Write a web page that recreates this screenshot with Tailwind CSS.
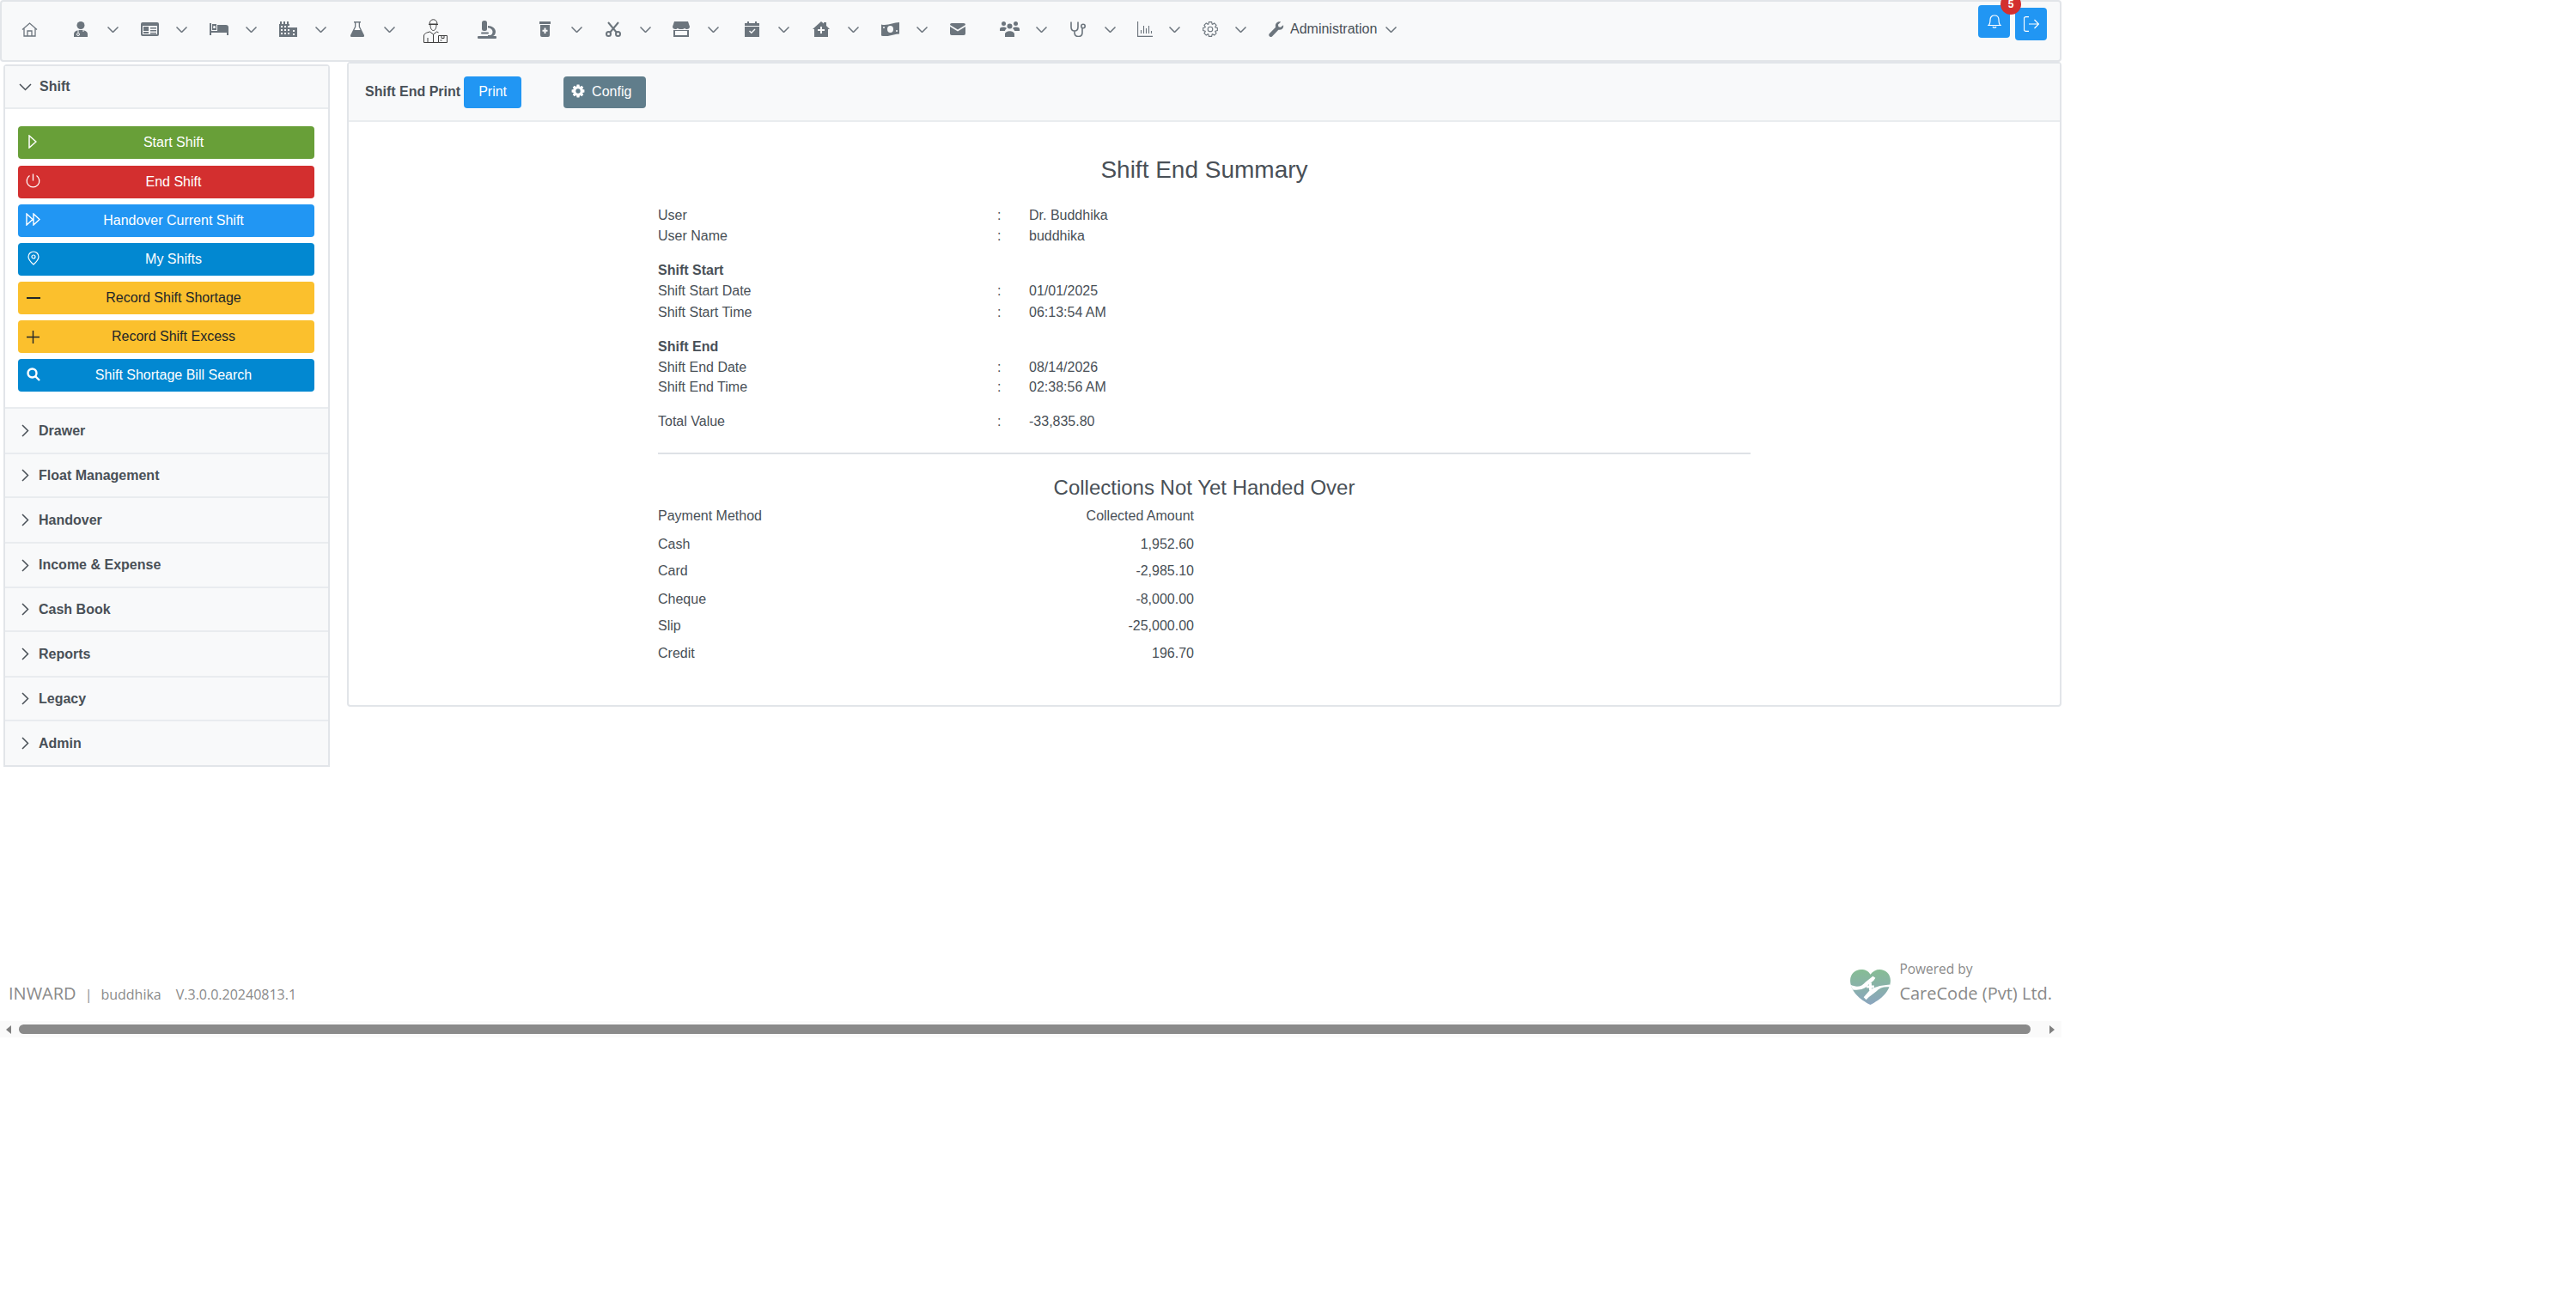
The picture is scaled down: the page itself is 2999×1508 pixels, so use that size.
<!DOCTYPE html>
<html lang="en">
<head>
  <meta charset="UTF-8" />
  <title>Shift End Summary</title>
  <script src="https://cdn.jsdelivr.net/npm/@tailwindcss/browser@4"></script>
</head>
<body class="bg-white font-['Liberation_Sans',sans-serif] text-[16px] text-[#495057]">
<div class="w-[2400px]">

  <!-- Top nav -->
  <nav class="relative h-[72px] bg-[#f8f9fa] border-2 border-[#e2e5e9] rounded-[4px] flex items-center text-[#6c757d]">
    <div class="flex items-center h-full pb-[4px] pl-[10px]">
      <!-- home -->
      <span class="w-[44px] mr-[16px] flex justify-center">
        <svg class="w-[19px] h-[17px]" viewBox="0 0 19 17" fill="none" stroke="currentColor" stroke-width="1.300"><path d="M1 8.500L9.500 1 18 8.500M3 7v9h13V7M7 16v-6h5v6"/></svg>
      </span>
      <!-- doctor -->
      <span class="w-[44px] flex justify-center">
        <svg class="w-[16px] h-[18px]" viewBox="0 0 16 18" fill="currentColor"><circle cx="8" cy="4.500" r="4.500"/><path d="M0 18v-3c0-3.500 3-5 8-5s8 1.500 8 5v3z"/><path fill="none" stroke="#f8f9fa" stroke-width="1" d="M5 10v3M11 10v2"/><circle cx="5" cy="15" r="1.500" fill="none" stroke="#f8f9fa"/></svg>
      </span>
      <span class="w-[30px] mr-[6px] flex justify-center">
        <svg class="w-[13px] h-[7px]" viewBox="0 0 13 7" fill="none" stroke="currentColor" stroke-width="1.500"><path d="M.5.500l6 6 6-6"/></svg>
      </span>
      <!-- id card -->
      <span class="w-[44px] flex justify-center">
        <svg class="w-[21px] h-[16px]" viewBox="0 0 21 16" fill="currentColor"><path fill-rule="evenodd" d="M2 0h17a2 2 0 012 2v12a2 2 0 01-2 2H2a2 2 0 01-2-2V2a2 2 0 012-2zM2 4v10h17V4z"/><path d="M3 5h6v5H3zM3 11h6v2H3zM11 6h7v1.500h-7zM11 9h7v1.500h-7zM11 12h7v1.500h-7z"/></svg>
      </span>
      <span class="w-[30px] mr-[7px] flex justify-center">
        <svg class="w-[13px] h-[7px]" viewBox="0 0 13 7" fill="none" stroke="currentColor" stroke-width="1.500"><path d="M.5.500l6 6 6-6"/></svg>
      </span>
      <!-- bed -->
      <span class="w-[44px] flex justify-center">
        <svg class="w-[22px] h-[14px]" viewBox="0 0 22 14" fill="currentColor"><path fill-rule="evenodd" d="M0 0h2v9h7V2h10a3 3 0 013 3v9h-2v-3H2v3H0z"/><path fill-rule="evenodd" d="M3 1h5v7H3zM5.500 3a1.500 1.500 0 100 3 1.500 1.500 0 000-3z"/></svg>
      </span>
      <span class="w-[30px] mr-[7px] flex justify-center">
        <svg class="w-[13px] h-[7px]" viewBox="0 0 13 7" fill="none" stroke="currentColor" stroke-width="1.500"><path d="M.5.500l6 6 6-6"/></svg>
      </span>
      <!-- hospital blocks -->
      <span class="w-[44px] flex justify-center">
        <svg class="w-[22px] h-[18px]" viewBox="0 0 22 18" fill="currentColor"><path d="M0 3h1V0h2v3h2V0h2v3h2V0h2v3h1v4h9v11H0z"/><path fill="#f8f9fa" d="M2 5h2v2H2zM6 5h2v2H6zM10 5h2v2h-2zM2 9h2v2H2zM6 9h2v2H6zM10 9h2v2h-2zM2 13h2v2H2zM6 13h2v2H6zM10 13h2v2h-2zM16 10h2v2h-2zM16 14h2v2h-2z"/></svg>
      </span>
      <span class="w-[30px] mr-[6px] flex justify-center">
        <svg class="w-[13px] h-[7px]" viewBox="0 0 13 7" fill="none" stroke="currentColor" stroke-width="1.500"><path d="M.5.500l6 6 6-6"/></svg>
      </span>
      <!-- flask -->
      <span class="w-[44px] flex justify-center">
        <svg class="w-[16px] h-[18px]" viewBox="0 0 16 18" fill="currentColor"><path d="M4 0h8v1.500h-1V6l5 10a1.500 1.500 0 01-1.500 2h-13A1.500 1.500 0 010 16L5 6V1.500H4z"/><path fill="#f8f9fa" d="M6.300 1.500h3.400v4.800L11.500 10h-7l1.800-3.700z"/></svg>
      </span>
      <span class="w-[30px] mr-[17px] flex justify-center">
        <svg class="w-[13px] h-[7px]" viewBox="0 0 13 7" fill="none" stroke="currentColor" stroke-width="1.500"><path d="M.5.500l6 6 6-6"/></svg>
      </span>
      <!-- delivery man -->
      <span class="w-[44px] mt-[4px] mr-[16px] flex justify-center">
        <svg class="w-[28px] h-[28px]" viewBox="0 0 28 28" fill="none" stroke="#3f3f3f" stroke-width="1"><path d="M7 6c0-7 9-7 9 0zM6 6.500h11M8 7c0 4 1.500 6.500 3.500 6.500S15 11 15 7M.5 27.500V20c0-3 3-4 7-5l4 3 4-3 2 .8M5 27.500V22M11.500 18v9.500M.5 27.500h17M17.500 19.500h10v8h-10zM21 19.500v3h3v-3M19.500 25h2"/></svg>
      </span>
      <!-- microscope -->
      <span class="w-[44px] mr-[23px] flex justify-center">
        <svg class="w-[22px] h-[21px]" viewBox="0 0 22 21" fill="currentColor"><rect x="5" y="0" width="6" height="12" rx="2.500"/><rect x="0" y="18" width="22" height="3" rx="1"/><path d="M12 6c5 0 9 3 9 7 0 3-2 5-4 5h-5v-1h3c2-1 2.500-2.500 2.500-4 0-2.500-2.500-4.500-5.500-4.500z"/><rect x="4" y="13.500" width="9" height="2" rx="1"/></svg>
      </span>
      <!-- medicine -->
      <span class="w-[44px] flex justify-center">
        <svg class="w-[13px] h-[18px]" viewBox="0 0 13 18" fill="currentColor"><path d="M0 0h13v3H0z"/><path fill-rule="evenodd" d="M1 4h11v12a2 2 0 01-2 2H3a2 2 0 01-2-2zM5.500 7.500v2.300H3.500v2h2V14h2v-2.200h2v-2h-2V7.500z"/></svg>
      </span>
      <span class="w-[30px] mr-[6px] flex justify-center">
        <svg class="w-[13px] h-[7px]" viewBox="0 0 13 7" fill="none" stroke="currentColor" stroke-width="1.500"><path d="M.5.500l6 6 6-6"/></svg>
      </span>
      <!-- scissors -->
      <span class="w-[44px] flex justify-center">
        <svg class="w-[18px] h-[18px]" viewBox="0 0 18 18" fill="none" stroke="currentColor" stroke-width="2"><circle cx="3.500" cy="14.500" r="2.500"/><circle cx="14.500" cy="14.500" r="2.500"/><path d="M3 1l10 12M15 1L5 13"/></svg>
      </span>
      <span class="w-[30px] mr-[5px] flex justify-center">
        <svg class="w-[13px] h-[7px]" viewBox="0 0 13 7" fill="none" stroke="currentColor" stroke-width="1.500"><path d="M.5.500l6 6 6-6"/></svg>
      </span>
      <!-- store -->
      <span class="w-[44px] flex justify-center">
        <svg class="w-[20px] h-[18px]" viewBox="0 0 20 18" fill="currentColor"><path d="M2 0h16l2 6c0 2-1.500 3-3.300 3-1.200 0-2-.5-2.500-1.300C13.700 8.500 12 9 10 9s-3.700-.5-4.200-1.300C5.300 8.500 4.500 9 3.300 9 1.500 9 0 8 0 6z"/><path fill-rule="evenodd" d="M1 10h18v8H1zM3 11v5h14v-5z"/></svg>
      </span>
      <span class="w-[30px] mr-[8px] flex justify-center">
        <svg class="w-[13px] h-[7px]" viewBox="0 0 13 7" fill="none" stroke="currentColor" stroke-width="1.500"><path d="M.5.500l6 6 6-6"/></svg>
      </span>
      <!-- calendar -->
      <span class="w-[44px] flex justify-center">
        <svg class="w-[17px] h-[18px]" viewBox="0 0 17 18" fill="currentColor"><path d="M3 0h2v2h7V0h2v2h3v3H0V2h3z"/><path fill-rule="evenodd" d="M0 6h17v12H0zM5 11.500l1-1 1.800 1.800 3.700-3.700 1 1-4.700 4.700z"/></svg>
      </span>
      <span class="w-[30px] mr-[7px] flex justify-center">
        <svg class="w-[13px] h-[7px]" viewBox="0 0 13 7" fill="none" stroke="currentColor" stroke-width="1.500"><path d="M.5.500l6 6 6-6"/></svg>
      </span>
      <!-- home medical -->
      <span class="w-[44px] flex justify-center">
        <svg class="w-[20px] h-[18px]" viewBox="0 0 20 18" fill="currentColor"><path fill-rule="evenodd" d="M10 0l3 2.500V1h3v4l4 4h-2v9H2V9H0zM9 6v3H6v2h3v3h2v-3h3V9h-3V6z"/></svg>
      </span>
      <span class="w-[30px] mr-[6px] flex justify-center">
        <svg class="w-[13px] h-[7px]" viewBox="0 0 13 7" fill="none" stroke="currentColor" stroke-width="1.500"><path d="M.5.500l6 6 6-6"/></svg>
      </span>
      <!-- money -->
      <span class="w-[44px] flex justify-center">
        <svg class="w-[21px] h-[16px]" viewBox="0 0 21 16" fill="currentColor"><path fill-rule="evenodd" d="M0 2.500C7 4.500 14 0 21 0v13.500C14 13.500 7 18 0 15.500zM10.500 4a3.500 4 0 100 8 3.500 4 0 000-8zM3 5a1 1 0 100 2 1 1 0 000-2zM18 9a1 1 0 100 2 1 1 0 000-2z"/></svg>
      </span>
      <span class="w-[30px] mr-[5px] flex justify-center">
        <svg class="w-[13px] h-[7px]" viewBox="0 0 13 7" fill="none" stroke="currentColor" stroke-width="1.500"><path d="M.5.500l6 6 6-6"/></svg>
      </span>
      <!-- mail -->
      <span class="w-[44px] mr-[16px] flex justify-center">
        <svg class="w-[18px] h-[14px]" viewBox="0 0 18 14" fill="currentColor"><path d="M2 0h14a2 2 0 012 2L9 7.500 0 2a2 2 0 012-2zM0 4l9 5.500L18 4v8a2 2 0 01-2 2H2a2 2 0 01-2-2z"/></svg>
      </span>
      <!-- users -->
      <span class="w-[44px] flex justify-center">
        <svg class="w-[23px] h-[18px]" viewBox="0 0 23 18" fill="currentColor"><circle cx="4.500" cy="2.500" r="2.500"/><circle cx="18.500" cy="2.500" r="2.500"/><circle cx="11.500" cy="5.500" r="3"/><path d="M0 9c0-3 6-3 8-1-1 1-2 2-2 3H0zM23 9c0-3-6-3-8-1 1 1 2 2 2 3h6zM6 18v-3c0-5 11-5 11 0v3z"/></svg>
      </span>
      <span class="w-[30px] mr-[6px] flex justify-center">
        <svg class="w-[13px] h-[7px]" viewBox="0 0 13 7" fill="none" stroke="currentColor" stroke-width="1.500"><path d="M.5.500l6 6 6-6"/></svg>
      </span>
      <!-- stethoscope -->
      <span class="w-[44px] flex justify-center">
        <svg class="w-[19px] h-[18px]" viewBox="0 0 19 18" fill="none" stroke="currentColor" stroke-width="1.600"><path d="M1 .5v6c0 3 2 4.500 4 4.500s4-1.500 4-4.500v-6M5 11v2c0 3 2 4.500 4.500 4.500S14 16 14 13V8"/><circle cx="15" cy="5.500" r="2.200"/></svg>
      </span>
      <span class="w-[30px] mr-[4px] flex justify-center">
        <svg class="w-[13px] h-[7px]" viewBox="0 0 13 7" fill="none" stroke="currentColor" stroke-width="1.500"><path d="M.5.500l6 6 6-6"/></svg>
      </span>
      <!-- chart -->
      <span class="w-[44px] -mr-[3px] flex justify-center">
        <svg class="w-[18px] h-[18px]" viewBox="0 0 18 18" fill="none" stroke="currentColor" stroke-width="1.100"><path d="M.6 0v17.400H18M4.500 14v-4M7.500 14V5M10.500 14V8M13.500 14V5M16.500 14v-3"/></svg>
      </span>
      <span class="w-[30px] mr-[5px] flex justify-center">
        <svg class="w-[13px] h-[7px]" viewBox="0 0 13 7" fill="none" stroke="currentColor" stroke-width="1.500"><path d="M.5.500l6 6 6-6"/></svg>
      </span>
      <!-- cog -->
      <span class="w-[44px] -mr-[2px] flex justify-center">
        <svg class="w-[18px] h-[18px]" viewBox="0 0 18 18" fill="none" stroke="currentColor" stroke-width="1.100"><polygon points="14.92,6.85 17.34,7.38 17.34,10.62 14.92,11.15 14.71,11.67 16.04,13.75 13.75,16.04 11.67,14.71 11.15,14.92 10.62,17.34 7.38,17.34 6.85,14.92 6.33,14.71 4.25,16.04 1.96,13.75 3.29,11.67 3.08,11.15 0.66,10.62 0.66,7.38 3.08,6.85 3.29,6.33 1.96,4.25 4.25,1.96 6.33,3.29 6.85,3.08 7.38,0.66 10.62,0.66 11.15,3.08 11.67,3.29 13.75,1.96 16.04,4.25 14.71,6.33"/><circle cx="9" cy="9" r="2.800"/></svg>
      </span>
      <span class="w-[30px] mr-[17px] flex justify-center">
        <svg class="w-[13px] h-[7px]" viewBox="0 0 13 7" fill="none" stroke="currentColor" stroke-width="1.500"><path d="M.5.500l6 6 6-6"/></svg>
      </span>
      <!-- wrench -->
      <svg class="w-[19px] h-[18px] mr-[7px]" viewBox="0 0 19 19" fill="currentColor"><path d="M18.500 4.500c.8 3-1.500 6.500-6 5.800L5 18.300c-1 1-2.500 1-3.500 0s-1-2.500-.2-3.300L9 7c-1-5 3-7.500 6.500-6.500L12 4l.7 2.500 2.500.7z"/></svg>
      <span class="text-[16px] text-[#495057] mr-[10px]">Administration</span>
      <svg class="w-[13px] h-[7px]" viewBox="0 0 13 7" fill="none" stroke="currentColor" stroke-width="1.500"><path d="M.5.500l6 6 6-6"/></svg>
    </div>

    <!-- Right buttons -->
    <div class="absolute right-[15px] top-[4px] flex items-start gap-[6px]">
      <div class="relative w-[37px] h-[38px] bg-[#2196f3] rounded-[4px] flex items-center justify-center">
        <svg class="w-[16px] h-[16px] -mt-[1px]" viewBox="0 0 16 16" fill="none" stroke="white" stroke-width="1.200"><path d="M1 12.500c2-1.500 2-4 2-6.500 0-3 2-5 5-5s5 2 5 5c0 2.500 0 5 2 6.500zM6 14c.5 1.600 3.500 1.600 4 0"/></svg>
        <span class="absolute -top-[13px] -right-[13px] w-[24px] h-[24px] rounded-full bg-[#d32f2f] text-white text-[12px] font-bold flex items-center justify-center">5</span>
      </div>
      <div class="w-[37px] h-[38px] mt-[3px] bg-[#2196f3] rounded-[4px] flex items-center justify-center">
        <svg class="w-[18px] h-[18px]" viewBox="0 0 18 18" fill="none" stroke="white" stroke-width="1.200"><path d="M6 .6H2.500a2 2 0 00-2 2v12.800a2 2 0 002 2H6M6 9h11.500M12.500 4l5 5-5 5"/></svg>
      </div>
    </div>
  </nav>

  <div class="flex items-start">
    <!-- Left accordion -->
    <aside class="w-[380px] ml-[4px] mt-[3px] border-2 border-[#e2e5e9] rounded-t-[4px] font-bold">
      <div class="h-[50px] bg-[#f8f9fa] flex items-center pl-[16px] border-b-2 border-[#e9ecef]">
        <svg class="w-[15px] h-[9px] mr-[9px]" viewBox="0 0 15 9" fill="none" stroke="#495057" stroke-width="1.500"><path d="M1 1l6.500 6.500L14 1"/></svg>
        <span>Shift</span>
      </div>
      <div class="h-[349px] pt-[20px] pl-[15px] pr-[16px] border-b-2 border-[#e9ecef] flex flex-col gap-[7px] font-normal">
        <div class="relative h-[38px] mb-[1px] pl-[17px] bg-[#689f38] rounded-[4px] text-white flex items-center justify-center">
          <svg class="absolute left-[12px] top-[10px] w-[10px] h-[16px]" viewBox="0 0 10 16" fill="none" stroke="white" stroke-width="1.500"><path d="M1 1v14l8-7z"/></svg>
          Start Shift
        </div>
        <div class="relative h-[38px] pl-[17px] bg-[#d32f2f] rounded-[4px] text-white flex items-center justify-center">
          <svg class="absolute left-[9px] top-[9px] w-[17px] h-[17px]" viewBox="0 0 17 17" fill="none" stroke="white" stroke-width="1.300"><path d="M8.500 .5v8M4.500 2.500a7.300 7.300 0 108 0"/></svg>
          End Shift
        </div>
        <div class="relative h-[38px] pl-[17px] bg-[#2196f3] rounded-[4px] text-white flex items-center justify-center">
          <svg class="absolute left-[9px] top-[10px] w-[17px] h-[15px]" viewBox="0 0 17 15" fill="none" stroke="white" stroke-width="1.400"><path d="M1 1v13l7-6.500zM9 1v13l7-6.500z"/></svg>
          Handover Current Shift
        </div>
        <div class="relative h-[38px] pl-[17px] bg-[#0288d1] rounded-[4px] text-white flex items-center justify-center">
          <svg class="absolute left-[11px] top-[9px] w-[14px] h-[17px]" viewBox="0 0 14 17" fill="none" stroke="white" stroke-width="1.200"><path d="M7 16C3 12.500 1 10 1 7a6 6 0 0112 0c0 3-2 5.500-6 9z"/><circle cx="7" cy="7" r="2"/></svg>
          My Shifts
        </div>
        <div class="relative h-[38px] pl-[17px] bg-[#fbc02d] rounded-[4px] text-[#212529] flex items-center justify-center">
          <svg class="absolute left-[10px] top-[18px] w-[16px] h-[2px]" viewBox="0 0 16 2" fill="#212529"><rect width="16" height="2"/></svg>
          Record Shift Shortage
        </div>
        <div class="relative h-[38px] pl-[17px] bg-[#fbc02d] rounded-[4px] text-[#212529] flex items-center justify-center">
          <svg class="absolute left-[10px] top-[12px] w-[15px] h-[15px]" viewBox="0 0 15 15" fill="none" stroke="#212529" stroke-width="1.400"><path d="M7.500 0v15M0 7.500h15"/></svg>
          Record Shift Excess
        </div>
        <div class="relative h-[38px] pl-[17px] bg-[#0288d1] rounded-[4px] text-white flex items-center justify-center">
          <svg class="absolute left-[10px] top-[10px] w-[16px] h-[16px]" viewBox="0 0 16 16" fill="none" stroke="white" stroke-width="2.400"><circle cx="6.500" cy="6.500" r="5"/><path d="M10 10l5 5"/></svg>
          Shift Shortage Bill Search
        </div>
      </div>
      <div class="h-[53px] bg-[#f8f9fa] flex items-center pl-[19px] border-b-2 border-[#e9ecef]">
        <svg class="w-[9px] h-[15px] mr-[11px]" viewBox="0 0 9 15" fill="none" stroke="#495057" stroke-width="1.500"><path d="M1 1l6.500 6.500L1 14"/></svg>
        <span>Drawer</span>
      </div>
      <div class="h-[51px] bg-[#f8f9fa] flex items-center pl-[19px] border-b-2 border-[#e9ecef]">
        <svg class="w-[9px] h-[15px] mr-[11px]" viewBox="0 0 9 15" fill="none" stroke="#495057" stroke-width="1.500"><path d="M1 1l6.500 6.500L1 14"/></svg>
        <span>Float Management</span>
      </div>
      <div class="h-[53px] bg-[#f8f9fa] flex items-center pl-[19px] border-b-2 border-[#e9ecef]">
        <svg class="w-[9px] h-[15px] mr-[11px]" viewBox="0 0 9 15" fill="none" stroke="#495057" stroke-width="1.500"><path d="M1 1l6.500 6.500L1 14"/></svg>
        <span>Handover</span>
      </div>
      <div class="h-[52px] bg-[#f8f9fa] flex items-center pl-[19px] border-b-2 border-[#e9ecef]">
        <svg class="w-[9px] h-[15px] mr-[11px]" viewBox="0 0 9 15" fill="none" stroke="#495057" stroke-width="1.500"><path d="M1 1l6.500 6.500L1 14"/></svg>
        <span>Income &amp; Expense</span>
      </div>
      <div class="h-[51px] bg-[#f8f9fa] flex items-center pl-[19px] border-b-2 border-[#e9ecef]">
        <svg class="w-[9px] h-[15px] mr-[11px]" viewBox="0 0 9 15" fill="none" stroke="#495057" stroke-width="1.500"><path d="M1 1l6.500 6.500L1 14"/></svg>
        <span>Cash Book</span>
      </div>
      <div class="h-[53px] bg-[#f8f9fa] flex items-center pl-[19px] border-b-2 border-[#e9ecef]">
        <svg class="w-[9px] h-[15px] mr-[11px]" viewBox="0 0 9 15" fill="none" stroke="#495057" stroke-width="1.500"><path d="M1 1l6.500 6.500L1 14"/></svg>
        <span>Reports</span>
      </div>
      <div class="h-[51px] bg-[#f8f9fa] flex items-center pl-[19px] border-b-2 border-[#e9ecef]">
        <svg class="w-[9px] h-[15px] mr-[11px]" viewBox="0 0 9 15" fill="none" stroke="#495057" stroke-width="1.500"><path d="M1 1l6.500 6.500L1 14"/></svg>
        <span>Legacy</span>
      </div>
      <div class="h-[51px] bg-[#f8f9fa] flex items-center pl-[19px]">
        <svg class="w-[9px] h-[15px] mr-[11px]" viewBox="0 0 9 15" fill="none" stroke="#495057" stroke-width="1.500"><path d="M1 1l6.500 6.500L1 14"/></svg>
        <span>Admin</span>
      </div>
    </aside>

    <!-- Main panel -->
    <main class="w-[1996px] ml-[20px] border-2 border-[#e2e5e9] rounded-[4px]">
      <div class="h-[68px] bg-[#f8f9fa] border-b-2 border-[#e9ecef] flex items-center pl-[19px]">
        <span class="font-bold">Shift End Print</span>
        <span class="ml-[4px] w-[67px] h-[37px] bg-[#2196f3] rounded-[4px] text-white flex items-center justify-center">Print</span>
        <span class="ml-[49px] w-[96px] h-[37px] pl-[9px] bg-[#607d8b] rounded-[4px] text-white flex items-center gap-[8px]">
          <svg class="w-[16px] h-[16px] -mt-[3px]" viewBox="0 0 18 18" fill="white"><polygon points="14.92,6.85 17.34,7.38 17.34,10.62 14.92,11.15 14.71,11.67 16.04,13.75 13.75,16.04 11.67,14.71 11.15,14.92 10.62,17.34 7.38,17.34 6.85,14.92 6.33,14.71 4.25,16.04 1.96,13.75 3.29,11.67 3.08,11.15 0.66,10.62 0.66,7.38 3.08,6.85 3.29,6.33 1.96,4.25 4.25,1.96 6.33,3.29 6.85,3.08 7.38,0.66 10.62,0.66 11.15,3.08 11.67,3.29 13.75,1.96 16.04,4.25 14.71,6.33"/><circle cx="9" cy="9" r="3" fill="#607d8b"/></svg>
          Config
        </span>
      </div>

      <div class="h-[679px] pt-[39px]">
        <h3 class="text-[28px] leading-[34px] text-center">Shift End Summary</h3>

        <div class="ml-[360px] w-[1272px] mt-[24px]">
          <div class="grid grid-cols-[395px_37px_1fr] h-[24px] leading-[24px]"><span>User</span><span>:</span><span>Dr. Buddhika</span></div>
          <div class="grid grid-cols-[395px_37px_1fr] h-[24px] leading-[24px]"><span>User Name</span><span>:</span><span>buddhika</span></div>
          <div class="font-bold h-[24px] leading-[24px] mt-[16px]">Shift Start</div>
          <div class="grid grid-cols-[395px_37px_1fr] h-[25px] leading-[24px]"><span>Shift Start Date</span><span>:</span><span>01/01/2025</span></div>
          <div class="grid grid-cols-[395px_37px_1fr] h-[24px] leading-[24px]"><span>Shift Start Time</span><span>:</span><span>06:13:54 AM</span></div>
          <div class="font-bold h-[24px] leading-[24px] mt-[16px]">Shift End</div>
          <div class="grid grid-cols-[395px_37px_1fr] h-[23px] leading-[24px]"><span>Shift End Date</span><span>:</span><span>08/14/2026</span></div>
          <div class="grid grid-cols-[395px_37px_1fr] h-[24px] leading-[24px]"><span>Shift End Time</span><span>:</span><span>02:38:56 AM</span></div>
          <div class="grid grid-cols-[395px_37px_1fr] h-[24px] leading-[24px] mt-[16px]"><span>Total Value</span><span>:</span><span>-33,835.80</span></div>

          <hr class="border-t-2 border-[#dee2e6] mt-[24px]" />

          <h4 class="text-[24px] leading-[30px] text-center mt-[24px]">Collections Not Yet Handed Over</h4>

          <div class="w-[624px] mt-[6px]">
            <div class="flex justify-between h-[33px] leading-[24px]"><span>Payment Method</span><span>Collected Amount</span></div>
            <div class="flex justify-between h-[31px] leading-[24px]"><span>Cash</span><span>1,952.60</span></div>
            <div class="flex justify-between h-[33px] leading-[24px]"><span>Card</span><span>-2,985.10</span></div>
            <div class="flex justify-between h-[31px] leading-[24px]"><span>Cheque</span><span>-8,000.00</span></div>
            <div class="flex justify-between h-[32px] leading-[24px]"><span>Slip</span><span>-25,000.00</span></div>
            <div class="flex justify-between h-[24px] leading-[24px]"><span>Credit</span><span>196.70</span></div>
          </div>
        </div>
      </div>
    </main>
  </div>

  <!-- Footer -->
  <footer class="h-[296px] flex items-end justify-between pl-[10px] pr-[11px] pb-[17px] font-['Open_Sans',sans-serif] text-[#8a8a8a]">
    <div class="flex items-baseline">
      <span class="text-[20px]">INWARD</span>
      <span class="text-[16px] ml-[10px]">|</span>
      <span class="text-[16px] ml-[10px]">buddhika</span>
      <span class="text-[16px] ml-[17px]">V.3.0.0.20240813.1</span>
    </div>
    <div class="flex items-center gap-[10px]">
      <svg class="w-[47px] h-[41px] mt-[8px]" viewBox="0 0 48 42">
        <defs><linearGradient id="heart" x1="0" y1="0" x2="0" y2="1"><stop offset="0" stop-color="#86bd94"/><stop offset="1" stop-color="#8ba5bf"/></linearGradient></defs>
        <path fill="url(#heart)" d="M24 42C12 36 0 26 0 13 0 5 6 0 13 0c5 0 9 2 11 6 3-4 7-6 11-6 7 0 13 5 13 13 0 13-12 23-24 29z"/>
        <path fill="white" d="M0 18c8 4 14 2 18-3l9-7 3 2-2 3-6 5c-5 6-12 7-19 6-1-2-2-4-3-6zM48 21c-8-1-13 1-17 5l-9 7-3 3-3-3 6-7c5-5 14-7 25-8z"/>
        <path fill="white" d="M22.500 16h3v3h3v3h-3v3h-3v-3h-3v-3h3z"/>
      </svg>
      <div>
        <div class="text-[15.500px] leading-[20px]">Powered by</div>
        <div class="text-[20px] leading-[30px] mt-[4px]">CareCode (Pvt) Ltd.</div>
      </div>
    </div>
  </footer>

  <!-- Horizontal scrollbar -->
  <div class="h-[19px] bg-[#fafafa] flex items-center">
    <div class="w-0 h-0 ml-[7px] border-y-[5px] border-y-transparent border-r-[6px] border-r-[#808080]"></div>
    <div class="w-[2342px] h-[11px] ml-[9px] rounded-full bg-[#8a8a8a]"></div>
    <div class="w-0 h-0 ml-[22px] border-y-[5px] border-y-transparent border-l-[6px] border-l-[#808080]"></div>
  </div>
</div>
</body>
</html>
